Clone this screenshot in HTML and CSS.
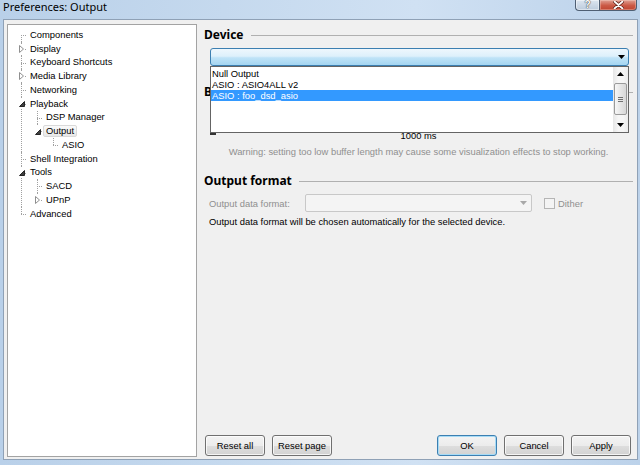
FILE: index.html
```html
<!DOCTYPE html>
<html>
<head>
<meta charset="utf-8">
<title>Preferences: Output</title>
<link rel="stylesheet" href="styles.css">
</head>
<body>
<div class="window">
  <div class="titlebar">
    <div class="title">Preferences: Output</div>
    <div class="caption">
      <div class="cap-btn help"><span class="q">?</span></div>
      <div class="cap-btn close">
        <svg width="11" height="8" viewBox="0 0 11 8"><path d="M1.5 0.5 L9.5 7.5 M9.5 0.5 L1.5 7.5" stroke="#5a2018" stroke-width="3.2" stroke-linecap="round"/><path d="M1.5 0.5 L9.5 7.5 M9.5 0.5 L1.5 7.5" stroke="#fff" stroke-width="1.8" stroke-linecap="round"/></svg>
      </div>
    </div>
  </div>
  <div class="client">
    <div class="tree">
      <ul>
        <li><div class="row"><span class="label">Components</span></div></li>
        <li><span class="exp"><svg width="5" height="8" viewBox="0 0 5 8"><path d="M0.5 0.5 L4.5 4 L0.5 7.5 Z" fill="#fff" stroke="#8f8f8f"/></svg></span><div class="row"><span class="label">Display</span></div></li>
        <li><div class="row"><span class="label">Keyboard Shortcuts</span></div></li>
        <li><span class="exp"><svg width="5" height="8" viewBox="0 0 5 8"><path d="M0.5 0.5 L4.5 4 L0.5 7.5 Z" fill="#fff" stroke="#8f8f8f"/></svg></span><div class="row"><span class="label">Media Library</span></div></li>
        <li><div class="row"><span class="label">Networking</span></div></li>
        <li><span class="exp open"><svg width="6" height="6" viewBox="0 0 6 6"><path d="M5.5 0.5 V5.5 H0.5 Z" fill="#404040" stroke="#262626"/></svg></span><div class="row"><span class="label">Playback</span></div>
          <ul>
            <li><div class="row"><span class="label">DSP Manager</span></div></li>
            <li><span class="exp open"><svg width="6" height="6" viewBox="0 0 6 6"><path d="M5.5 0.5 V5.5 H0.5 Z" fill="#404040" stroke="#262626"/></svg></span><div class="row"><span class="label sel">Output</span></div>
              <ul>
                <li><div class="row"><span class="label">ASIO</span></div></li>
              </ul>
            </li>
          </ul>
        </li>
        <li><div class="row"><span class="label">Shell Integration</span></div></li>
        <li><span class="exp open"><svg width="6" height="6" viewBox="0 0 6 6"><path d="M5.5 0.5 V5.5 H0.5 Z" fill="#404040" stroke="#262626"/></svg></span><div class="row"><span class="label">Tools</span></div>
          <ul>
            <li><div class="row"><span class="label">SACD</span></div></li>
            <li><span class="exp"><svg width="5" height="8" viewBox="0 0 5 8"><path d="M0.5 0.5 L4.5 4 L0.5 7.5 Z" fill="#fff" stroke="#8f8f8f"/></svg></span><div class="row"><span class="label">UPnP</span></div></li>
          </ul>
        </li>
        <li><div class="row"><span class="label">Advanced</span></div></li>
      </ul>
    </div>

    <div class="main">
      <div class="heading first">Device</div>
      <div class="combo-wrap">
        <div class="combo device">
          <svg width="7" height="4" viewBox="0 0 7 4"><path d="M0 0 H7 L3.5 4 Z" fill="#000"/></svg>
        </div>
        <div class="dropdown">
          <div class="items">
            <div class="item">Null Output</div>
            <div class="item">ASIO : ASIO4ALL v2</div>
            <div class="item sel">ASIO : foo_dsd_asio</div>
          </div>
          <div class="scrollbar">
            <div class="sb-btn"><svg width="7" height="4" viewBox="0 0 7 4"><path d="M0 4 H7 L3.5 0 Z" fill="#000"/></svg></div>
            <div class="sb-track">
              <div class="thumb"><svg width="5" height="5" viewBox="0 0 5 5"><path d="M0 0.5 H5 M0 2.5 H5 M0 4.5 H5" stroke="#707070"/></svg></div>
            </div>
            <div class="sb-btn"><svg width="7" height="4" viewBox="0 0 7 4"><path d="M0 0 H7 L3.5 4 Z" fill="#000"/></svg></div>
          </div>
        </div>
      </div>

      <div class="heading buffer">Buffer length</div>
      <div class="slider"></div>
      <div class="scale">
        <div class="tick"></div>
        <div class="scale-value">1000 ms</div>
        <div></div>
      </div>
      <div class="warning">Warning: setting too low buffer length may cause some visualization effects to stop working.</div>

      <div class="heading format">Output format</div>
      <div class="format-row">
        <span class="fmt-label">Output data format:</span>
        <div class="combo disabled">
          <svg width="7" height="4" viewBox="0 0 7 4"><path d="M0 0 H7 L3.5 4 Z" fill="#a8a8a8"/></svg>
        </div>
        <span class="checkbox"></span>
        <span class="dither">Dither</span>
      </div>
      <div class="info">Output data format will be chosen automatically for the selected device.</div>

      <div class="buttons">
        <div class="btn-group">
          <button class="btn">Reset all</button>
          <button class="btn">Reset page</button>
        </div>
        <div class="btn-group">
          <button class="btn default">OK</button>
          <button class="btn">Cancel</button>
          <button class="btn">Apply</button>
        </div>
      </div>
    </div>
  </div>
</div>
</body>
</html>
```

FILE: styles.css
```css
* { box-sizing: border-box; }
html, body { margin: 0; padding: 0; }
body {
  width: 640px;
  height: 465px;
  overflow: hidden;
  font-family: "Liberation Sans", Arial, sans-serif;
  font-size: 9.4px;
  color: #000;
}

.window {
  width: 640px;
  height: 465px;
  display: flex;
  flex-direction: column;
  padding: 0 2px 5px 3px;
  background: linear-gradient(to right, #b9d0e9 0%, #c5d9ee 35%, #d0e1f3 65%, #bcd2ea 100%);
}

.titlebar {
  height: 19px;
  display: flex;
  justify-content: space-between;
  align-items: flex-start;
}
.title {
  font-family: "Noto Sans", "Open Sans", sans-serif;
  font-size: 11px;
  line-height: 13px;
  color: #000;
}
.caption {
  display: flex;
  margin-right: 1px;
}
.cap-btn {
  height: 11px;
  border: 1px solid #4f5f73;
  border-top: none;
  display: flex;
  justify-content: center;
  align-items: flex-start;
  overflow: hidden;
}
.help {
  width: 24px;
  border-right: none;
  border-radius: 0 0 0 4px;
  background: linear-gradient(#dde6f0, #bccbdc);
  box-shadow: inset 0 0 0 1px rgba(255, 255, 255, 0.45);
}
.q {
  font: bold 10px/9px "Liberation Sans", sans-serif;
  color: #fff;
  text-shadow: 0 0 1px #333, 0 0 1px #333;
}
.close {
  width: 38px;
  border-radius: 0 0 4px 0;
  background: linear-gradient(#e0a194, #cb5a46 55%, #bf4631);
  box-shadow: inset 0 0 0 1px rgba(255, 220, 210, 0.35);
  padding-top: 1px;
}

.client {
  flex: 1;
  display: flex;
  border: 1px solid #8fa1b6;
  background: #f0f0f0;
}

/* tree */
.tree {
  width: 190px;
  margin: 4px 0 2px 3px;
  border: 1px solid #a3a3a3;
  background: #fff;
  padding-top: 3px;
}
.tree ul {
  list-style: none;
  margin: 0;
  padding: 0 0 0 10px;
}
.tree > ul { padding-left: 13px; }
.tree li {
  position: relative;
  padding-left: 6px;
}
.tree li::before {
  content: "";
  position: absolute;
  left: 0;
  top: 7px;
  width: 5px;
  border-top: 1px dotted #a0a0a0;
}
.tree li::after {
  content: "";
  position: absolute;
  left: 0;
  top: 0;
  bottom: 0;
  border-left: 1px dotted #a0a0a0;
}
.tree li:last-child::after {
  bottom: auto;
  height: 7px;
}
.tree > ul > li:first-child::after { top: 7px; }
.row {
  height: 13.75px;
  display: flex;
  align-items: center;
}
.label {
  line-height: 10px;
  padding: 0 2px;
  border: 1px solid transparent;
  white-space: nowrap;
}
.label.sel {
  border-color: #d9d9d9;
  border-radius: 2px;
  background: linear-gradient(#fafafa, #e8e8e8);
}
.exp {
  position: absolute;
  left: -3px;
  top: 2px;
  width: 7px;
  height: 10px;
  background: #fff;
  display: flex;
  align-items: center;
  justify-content: center;
  z-index: 1;
}
.exp.open { padding-top: 1px; }

/* main */
.main {
  flex: 1;
  min-width: 0;
  display: flex;
  flex-direction: column;
  padding: 0 4px 3px 7px;
}
.heading {
  display: flex;
  align-items: center;
  gap: 7px;
  font: bold 12px/14px "Noto Sans", "Open Sans", sans-serif;
  color: #000;
}
.heading::after {
  content: "";
  flex: 1;
  height: 1px;
  background: #b0b0b0;
}
.heading.first { margin-top: 8px; }
.heading.buffer { margin-top: 19px; }
.heading.format { margin-top: 16px; }

.combo-wrap {
  position: relative;
  margin: 6px 4px 0 6px;
}
.combo {
  display: flex;
  align-items: center;
  justify-content: flex-end;
}
.combo.device {
  height: 18px;
  border: 1px solid #3c7fb1;
  border-radius: 3px;
  padding-right: 3px;
  background: linear-gradient(#eef7fd 0%, #ddf0fb 45%, #bfe3f7 55%, #a4d5f1 100%);
}
.dropdown {
  position: absolute;
  left: 0;
  right: 0;
  top: 18px;
  height: 67px;
  border: 1px solid #646464;
  background: #fff;
  display: flex;
  z-index: 5;
}
.items {
  flex: 1;
  padding-top: 1px;
}
.item {
  height: 11px;
  line-height: 11px;
  padding-left: 1px;
  white-space: nowrap;
}
.item.sel {
  background: #3399ff;
  color: #fff;
}
.scrollbar {
  width: 15px;
  display: flex;
  flex-direction: column;
  background: linear-gradient(to right, #e6e6e6, #f6f6f6 35%, #f6f6f6 70%, #ececec);
}
.sb-btn {
  height: 14px;
  display: flex;
  align-items: center;
  justify-content: center;
}
.sb-track { flex: 1; }
.thumb {
  margin: 2px 1px 3px 1px;
  height: 32px;
  border: 1px solid #9a9a9a;
  border-radius: 2px;
  background: linear-gradient(to right, #f7f7f7, #e6e6e6 50%, #d8d8d8);
  display: flex;
  align-items: center;
  justify-content: center;
}

.slider { height: 31px; }
.scale {
  display: grid;
  grid-template-columns: 1fr auto 1fr;
  line-height: 12px;
}
.tick {
  width: 6px;
  height: 2px;
  background: #333;
  margin: 3px 0 0 6px;
}
.warning {
  margin-top: 4px;
  line-height: 12px;
  text-align: center;
  color: #8f8f8f;
}

.format-row {
  display: flex;
  align-items: center;
  height: 18px;
  margin-top: 6px;
}
.fmt-label {
  width: 96px;
  margin-left: 5px;
  color: #8f8f8f;
  white-space: nowrap;
}
.combo.disabled {
  width: 227px;
  height: 18px;
  border: 1px solid #c8c8c8;
  border-radius: 2px;
  background: #f4f4f4;
  padding-right: 4px;
}
.checkbox {
  width: 11px;
  height: 11px;
  margin-left: 12px;
  border: 1px solid #b5b5b5;
  background: #f4f4f4;
}
.dither {
  margin-left: 3px;
  color: #8f8f8f;
}
.info {
  margin: 4px 0 0 5px;
  line-height: 12px;
}

.buttons {
  margin-top: auto;
  display: flex;
  justify-content: space-between;
  padding: 0 2px 0 1px;
}
.btn-group {
  display: flex;
  gap: 7px;
}
.btn {
  width: 60px;
  height: 21px;
  padding: 0;
  margin: 0;
  font: inherit;
  color: #000;
  border: 1px solid #707070;
  border-radius: 3px;
  background: linear-gradient(#f3f3f3 0%, #ececec 50%, #dedede 51%, #d2d2d2 100%);
  box-shadow: inset 0 0 0 1px rgba(255, 255, 255, 0.75);
  display: flex;
  align-items: center;
  justify-content: center;
}
.btn.default {
  border-color: #3c7fb1;
  box-shadow: inset 0 0 0 1px #a6dbf6;
}
```
